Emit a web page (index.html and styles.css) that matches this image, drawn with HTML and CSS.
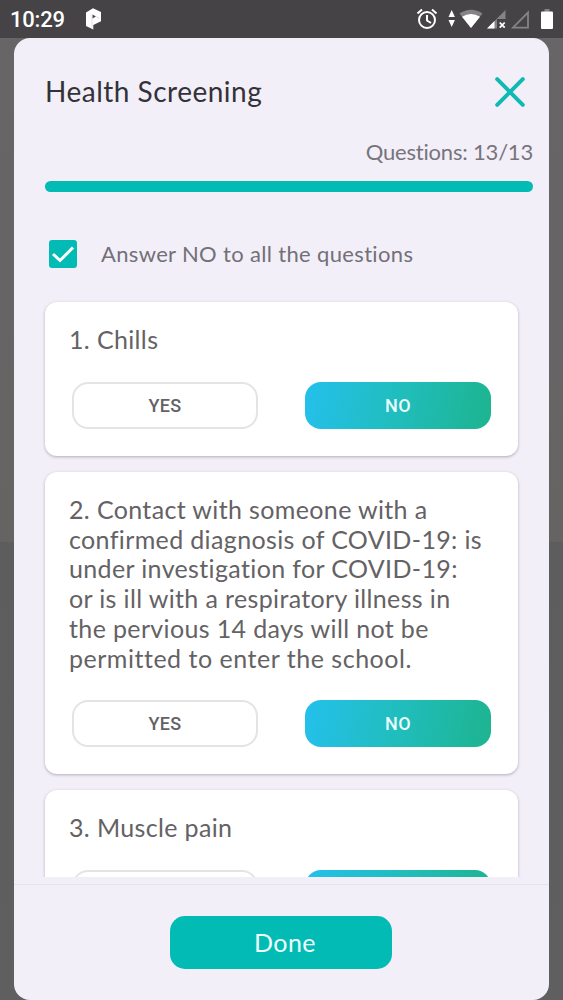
FILE: index.html
```html
<!DOCTYPE html>
<html lang="en">
<head>
  <meta charset="UTF-8" />
  <meta name="viewport" content="width=device-width, initial-scale=1" />
  <title>Health Screening</title>
  <link rel="stylesheet" href="styles.css">
</head>
<body>

  <header class="status-bar">
    <span class="time">10:29</span>
    <svg class="app-icon" width="16" height="22" viewBox="0 0 16 22">
      <path fill="#fff" d="M0 4.500L7 0.300L15 4V13.300L7.300 17V21.500L0 18Z" />
      <path fill="#454345" d="M6.500 6.500L10 8.500L6.500 10.500Z" />
      <path fill="none" stroke="#c5c3c5" stroke-width=".5" d="M6 6V20M8.500 7.700L13 10.500" />
    </svg>
    <svg class="status-icons" width="140" height="24" viewBox="0 0 140 24">
      <!-- alarm -->
      <g fill="none" stroke="#fff" stroke-width="2">
        <circle cx="12" cy="13" r="8" />
        <path d="M12 8V13.500L16 16M2.500 6.500L7 2.500M17 2.500L21.500 6.500" />
      </g>
      <!-- data arrows -->
      <path fill="#fff" d="M33.500 10L36.700 3L39.900 10ZM33.500 13L36.700 20L39.900 13Z" />
      <!-- wifi -->
      <path fill="#858385" d="M44.500 6.500Q56 -1 67.500 6.500L56 21Z" />
      <path fill="#fff" d="M47 9.700Q56 4.500 65 9.700L56 21Z" />
      <!-- signal, no data -->
      <path fill="#858385" d="M72 21.500L90.500 3V12H82V21.500Z" />
      <path fill="#fff" d="M72 21.500L79.500 14V21.500Z" />
      <path fill="none" stroke="#fff" stroke-width="1.800" d="M84.700 15.500L89.700 20.700M89.700 15.500L84.700 20.700" />
      <!-- empty signal -->
      <path fill="none" stroke="#858385" stroke-width="1.800" d="M98 20.600L113 5.500V20.600Z" />
      <!-- battery -->
      <path fill="#858385" d="M129.500 2H134.500V5H129.500Z" />
      <rect fill="#fff" x="126" y="4.500" width="12" height="17.500" rx="1" />
    </svg>
  </header>

  <main class="modal">
    <div class="modal-header">
      <h1>Health Screening</h1>
      <button class="close" aria-label="Close">
        <svg width="30" height="30" viewBox="0 0 30 30">
          <path fill="none" stroke="#10b9b3" stroke-width="4" stroke-linecap="round" d="M2.200 2.200L27.800 27.800M27.800 2.200L2.200 27.800" />
        </svg>
      </button>
    </div>

    <p class="counter">Questions: 13/13</p>
    <div class="progress"></div>

    <label class="answer-all">
      <svg width="28" height="28" viewBox="0 0 28 28">
        <rect width="28" height="28" rx="3" fill="#03bbb5" />
        <path fill="none" stroke="#fff" stroke-width="3" d="M4 14L11 20.500L24 7.500" />
      </svg>
      <span>Answer NO to all the questions</span>
    </label>

    <div class="questions">
      <section class="card">
        <p class="question">1. Chills</p>
        <div class="answers">
          <button class="answer">YES</button>
          <button class="answer selected">NO</button>
        </div>
      </section>

      <section class="card">
        <p class="question">
          2. Contact with someone with a<br>
          confirmed diagnosis of COVID-19: is<br>
          under investigation for COVID-19:<br>
          or is ill with a respiratory illness in<br>
          the pervious 14 days will not be<br>
          <span class="last-line">permitted to enter the school.</span>
        </p>
        <div class="answers">
          <button class="answer">YES</button>
          <button class="answer selected">NO</button>
        </div>
      </section>

      <section class="card">
        <p class="question">3. Muscle pain</p>
        <div class="answers">
          <!-- only the top edge of these shows above the footer -->
          <button class="answer" aria-label="Yes"></button>
          <button class="answer selected" aria-label="No"></button>
        </div>
      </section>
    </div>

    <footer class="modal-footer">
      <button class="done">Done</button>
    </footer>
  </main>

</body>
</html>
```
FILE: styles.css
```css
* {
  box-sizing: border-box;
}
body {
  margin: 0;
  height: 1000px;
  overflow: hidden;
  display: flex;
  flex-direction: column;
  font-family: Lato, sans-serif;
  font-variant-ligatures: none;
  background: linear-gradient(#676566 0, #656463 542px, #5e5d5d 542px, #605f60 100%);
}
h1, p {
  margin: 0;
  font-weight: 400;
}
button {
  padding: 0;
  border: none;
  background: none;
  font-family: inherit;
}
.status-bar {
  flex: none;
  height: 38px;
  display: flex;
  align-items: center;
  padding: 0 8px 0 10px;
  background: #454345;
  color: #fff;
}
.time {
  width: 76px;
  padding-top: 1px;
  font: 500 22px/38px Roboto, sans-serif;
  letter-spacing: -0.2px;
}
.status-icons {
  margin-left: auto;
}
.modal {
  flex: none;
  width: 535px;
  height: 962px;
  margin-left: 14px;
  display: flex;
  flex-direction: column;
  background: #f2eff8;
  border-radius: 16px;
  overflow: hidden;
  color: #646264;
}
.modal-header {
  display: flex;
  justify-content: space-between;
  align-items: center;
  height: 60px;
  margin-top: 24px;
  padding: 0 24px 0 31px;
}
h1 {
  padding-bottom: 2px;
  font-size: 28px;
  letter-spacing: 0.5px;
  color: #343238;
}
.close {
  display: flex;
}
.counter {
  height: 30px;
  margin: 14px 16px 0 0;
  text-align: right;
  font-size: 22px;
  line-height: 31px;
  letter-spacing: -0.2px;
  color: #77747d;
}
.progress {
  height: 11px;
  margin: 15px 16px 0 31px;
  border-radius: 6px;
  background: #03bbb5;
}
.answer-all {
  display: flex;
  align-items: center;
  gap: 24px;
  height: 30px;
  margin: 47px 0 0 35px;
  font-size: 22px;
  letter-spacing: 0.34px;
  color: #737078;
}
.answer-all span {
  padding-bottom: 2px;
}
.questions {
  height: 577px;
  margin-top: 31px;
  padding: 2px 31px 0;
  overflow: hidden;
  display: flex;
  flex-direction: column;
  gap: 16px;
}
.card {
  flex: none;
  width: 473px;
  padding: 23px 27px 27px 24px;
  border-radius: 12px;
  background: #fff;
  box-shadow: 0 1px 3px rgba(60, 50, 70, 0.35);
}
.question {
  font-size: 25px;
  line-height: 29.750px;
  letter-spacing: 0.36px;
  white-space: nowrap;
}
.last-line {
  letter-spacing: 0.52px;
}
.answers {
  display: flex;
  justify-content: space-between;
  margin: 27px 0 0 3px;
}
.answer {
  width: 186px;
  height: 47px;
  border: 2px solid #e5e3e5;
  border-radius: 16px;
  background: #fff;
  color: #646264;
  font: 500 18px Roboto, sans-serif;
  letter-spacing: 0.3px;
}
.selected {
  border: none;
  background: linear-gradient(100deg, #24c0ec, #20bdbb 52%, #1db48f);
  color: #eafcfb;
}
.modal-footer {
  flex: 1;
  margin-top: 7px;
  padding-top: 31px;
  border-top: 1px solid #e5e2e9;
  text-align: center;
}
.done {
  display: block;
  width: 222px;
  height: 53px;
  margin-left: 156px;
  padding: 0 0 2px 8px;
  border-radius: 15px;
  background: #03bbb5;
  color: #effdfc;
  font-size: 25px;
  letter-spacing: 0.4px;
}
```
